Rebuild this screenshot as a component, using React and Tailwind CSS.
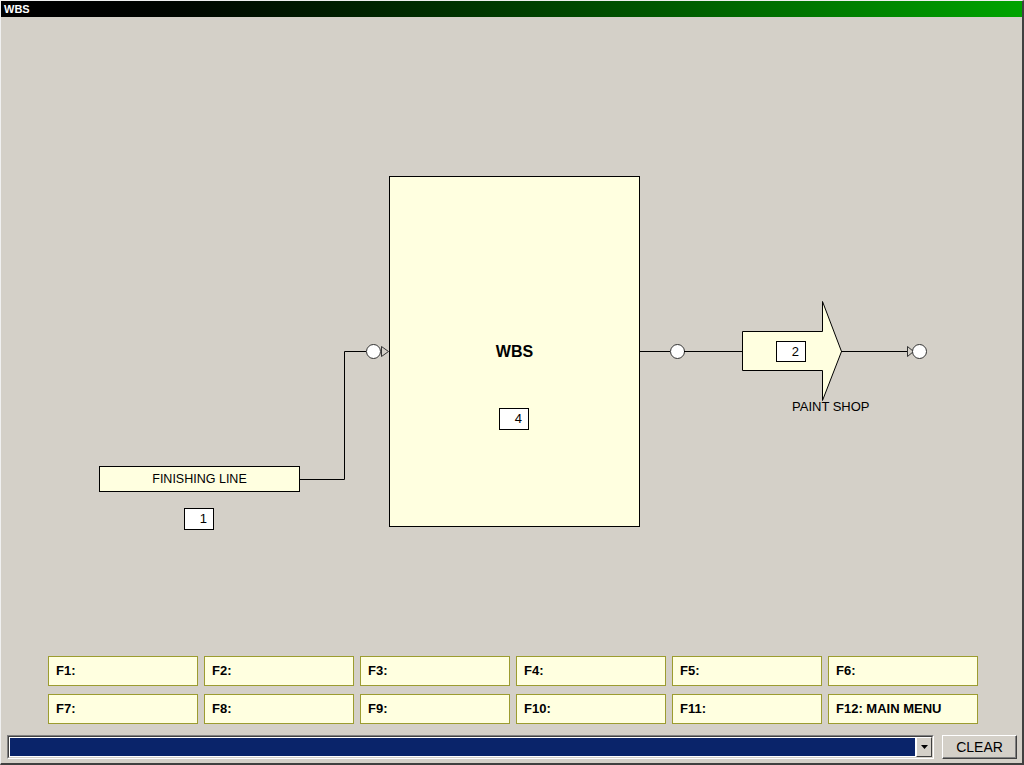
const KEYS = [
  "F1:", "F2:", "F3:", "F4:", "F5:", "F6:",
  "F7:", "F8:", "F9:", "F10:", "F11:", "F12: MAIN MENU",
];

function NumBox({ className, value }) {
  return (
    <div
      className={`absolute flex items-center justify-end border border-black bg-white pr-[6px] text-[13px] text-black ${className}`}
    >
      {value}
    </div>
  );
}

function Diagram() {
  return (
    <div className="relative -ml-px flex-1">
      <svg className="absolute left-0 top-0" width="1020" height="640">
        <polyline
          points="299,462.5 344.5,462.5 344.5,334.5 366,334.5"
          fill="none"
          stroke="#000"
        />
        <circle cx="373.5" cy="334.5" r="7" fill="#fff" stroke="#333" />
        <polygon points="381.5,329.5 388.5,334.5 381.5,339.5" fill="none" stroke="#333" />
        <line x1="640" y1="334.5" x2="670" y2="334.5" stroke="#000" />
        <circle cx="677.5" cy="334.5" r="7" fill="#fff" stroke="#333" />
        <line x1="684" y1="334.5" x2="742" y2="334.5" stroke="#000" />
        <polygon
          points="742.5,314.5 822.5,314.5 822.5,284.5 841.5,334.5 822.5,383.5 822.5,353.5 742.5,353.5"
          fill="#ffffe0"
          stroke="#000"
        />
        <line x1="841" y1="334.5" x2="908" y2="334.5" stroke="#000" />
        <polygon points="907.5,329.5 913.5,334.5 907.5,339.5" fill="none" stroke="#333" />
        <circle cx="919.5" cy="334.5" r="7" fill="#fff" stroke="#333" />
      </svg>

      <div className="absolute left-[389px] top-[159px] h-[351px] w-[251px] border border-black bg-[#ffffe0]">
        <div className="mt-[165px] text-center text-[16px] font-bold leading-[20px] text-black">WBS</div>
      </div>
      <NumBox className="left-[499px] top-[391px] h-[22px] w-[30px]" value="4" />

      <div className="absolute left-[99px] top-[449px] flex h-[26px] w-[201px] items-center justify-center border border-black bg-[#ffffe0] text-[12.5px] text-black">
        FINISHING LINE
      </div>
      <NumBox className="left-[184px] top-[491px] h-[22px] w-[30px]" value="1" />

      <NumBox className="left-[776px] top-[324px] h-[21px] w-[30px]" value="2" />
      <div className="absolute left-[792px] top-[380px] text-[13px] text-black">PAINT SHOP</div>
    </div>
  );
}

export default function App() {
  return (
    <div
      className="flex h-[765px] w-[1024px] flex-col border-b-2 border-l border-r-2 border-t border-b-[#404040] border-l-[#f0f0f0] border-r-[#404040] border-t-[#f0f0f0] bg-[#d4d0c8]"
      style={{ fontFamily: '"Liberation Sans", Arial, sans-serif' }}
    >
      <div className="flex h-[16px] items-center bg-gradient-to-r from-black via-[#003c00] to-[#00a400] pl-[3px] text-[11px] font-bold leading-none text-white">
        WBS
      </div>

      <Diagram />

      <div className="grid grid-cols-[repeat(6,150px)] gap-x-[6px] gap-y-[8px] pl-[47px]">
        {KEYS.map((k) => (
          <div
            key={k}
            className="flex h-[30px] items-center border border-[#9c9c30] bg-[#ffffe0] pl-[7px] text-[13px] font-bold text-black"
          >
            {k}
          </div>
        ))}
      </div>

      <div className="mb-[4px] mt-[11px] flex items-center gap-[8px] pl-[6px] pr-[5px]">
        <div className="flex h-[24px] flex-1 border border-b-white border-l-[#808080] border-r-white border-t-[#808080]">
          <div className="flex flex-1 border border-b-[#d4d0c8] border-l-[#404040] border-r-[#d4d0c8] border-t-[#404040]">
            <div className="flex-1 border border-white bg-[#0a246a]" />
            <div className="flex w-[16px] items-center justify-center border border-b-[#404040] border-l-white border-r-[#404040] border-t-white bg-[#d4d0c8]">
              <svg width="7" height="4" viewBox="0 0 7 4">
                <polygon points="0,0 7,0 3.5,4" fill="#000" />
              </svg>
            </div>
          </div>
        </div>
        <button className="h-[24px] w-[75px] border border-b-[#404040] border-l-white border-r-[#404040] border-t-white bg-[#d4d0c8] text-[14px] text-black shadow-[inset_-1px_-1px_0_#808080]">
          CLEAR
        </button>
      </div>
    </div>
  );
}
